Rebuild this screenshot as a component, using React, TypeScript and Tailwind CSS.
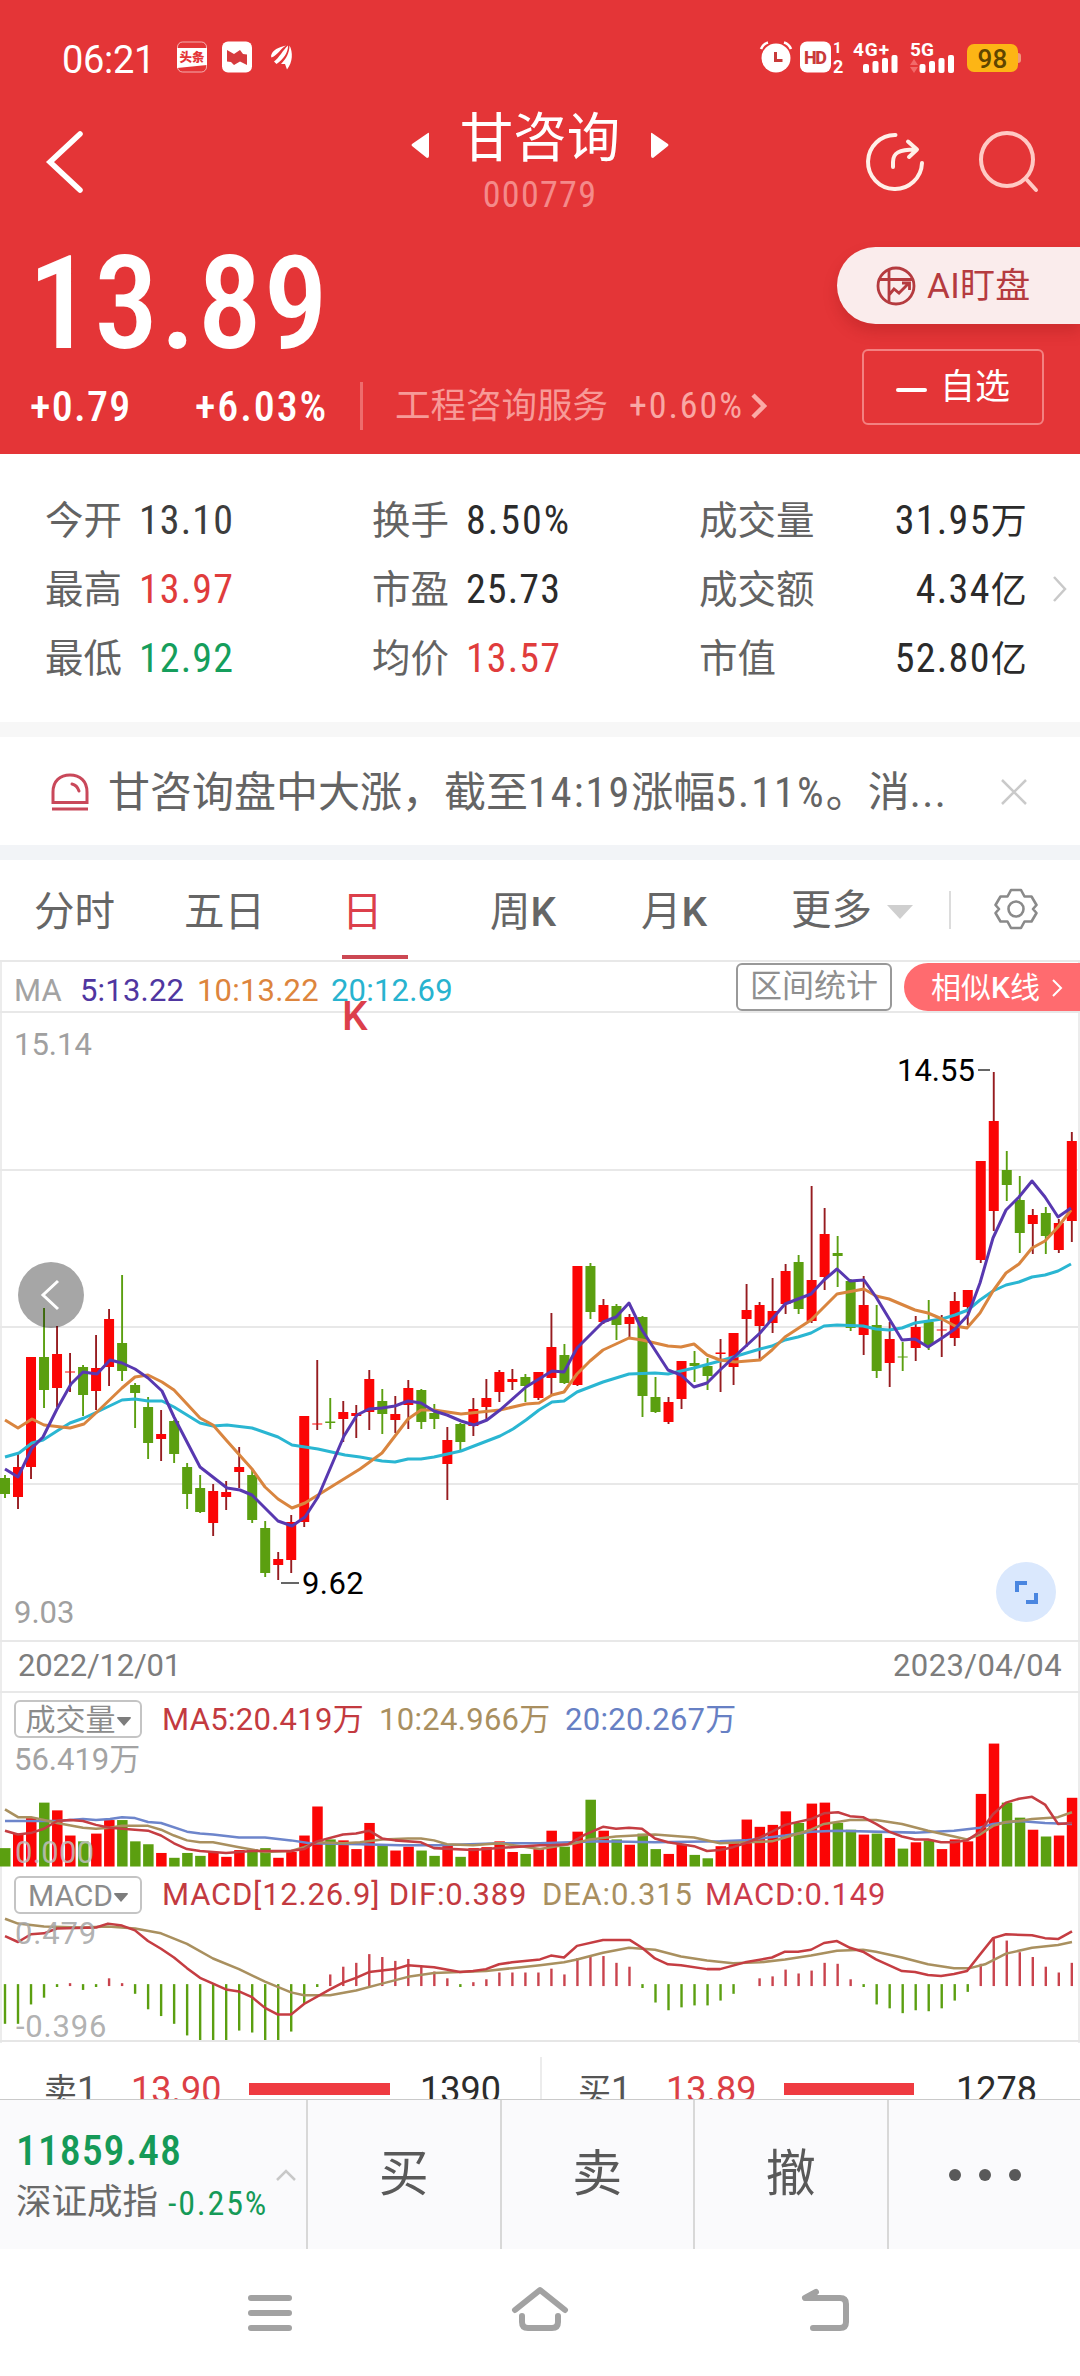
const RED = '#fb0505';
const GREEN = '#5b9f10';

const SANS = '[font-family:Roboto,"Noto_Sans_CJK_SC",sans-serif]';
const DIN = '[font-family:Roboto,"Noto_Sans_CJK_SC",sans-serif] [font-stretch:75%]';

const quotes = [
    [
        { label: '今开', value: '13.10', color: 'text-[#3d3d3d]' },
        { label: '最高', value: '13.97', color: 'text-[#e03c3c]' },
        { label: '最低', value: '12.92', color: 'text-[#159e5c]' },
    ],
    [
        { label: '换手', value: '8.50%', color: 'text-[#2b2b2b]' },
        { label: '市盈', value: '25.73', color: 'text-[#2b2b2b]' },
        { label: '均价', value: '13.57', color: 'text-[#e03c3c]' },
    ],
];

const totals = [
    { label: '成交量', value: '31.95', unit: '万' },
    { label: '成交额', value: '4.34', unit: '亿' },
    { label: '市值', value: '52.80', unit: '亿' },
];

// [high, body top, body bottom, low, 1 = up / 0 = down]
const candles = [
    [1475, 1478, 1494, 1498, 0], [1453, 1467, 1497, 1509, 1], [1357, 1357, 1467, 1479, 1], [1308, 1357, 1390, 1408, 0],
    [1326, 1354, 1388, 1407, 1], [1353, 1371.5, 1372.5, 1392, 1], [1365, 1367, 1395, 1416, 0], [1335, 1368, 1391, 1410, 1],
    [1309, 1319, 1367, 1386, 1], [1275, 1343, 1371, 1381, 0], [1383, 1385, 1393, 1428, 0], [1397, 1407, 1443, 1459, 0],
    [1410, 1434, 1439, 1461, 1], [1420, 1421, 1454, 1463, 0], [1463, 1467, 1494, 1509, 0], [1475, 1488, 1512, 1513, 0],
    [1484, 1491, 1523, 1536, 1], [1481, 1492, 1497, 1510, 1], [1447, 1467, 1472, 1488, 1], [1470, 1475, 1520, 1523, 0],
    [1521, 1528, 1573, 1577, 0], [1552, 1559, 1565, 1580, 1], [1515, 1522, 1560, 1573, 1], [1416, 1416, 1522, 1527, 1],
    [1360, 1423.5, 1424.5, 1430, 1], [1398, 1421.5, 1423, 1429, 0], [1401, 1412, 1419, 1442, 1], [1405, 1413, 1416, 1438, 1],
    [1370, 1379, 1412, 1430, 1], [1389, 1401, 1414, 1434, 0], [1396, 1414, 1420, 1433, 1], [1380, 1388, 1405, 1429, 1],
    [1389, 1390, 1422, 1429, 0], [1404, 1413, 1419, 1429, 0], [1427, 1440, 1464, 1500, 1], [1423, 1424, 1442, 1450, 0],
    [1398, 1409, 1426, 1436, 1], [1379, 1398, 1407, 1419, 1], [1370, 1372, 1392, 1402, 1], [1369, 1379, 1382, 1390, 1],
    [1374, 1377, 1386, 1402, 0], [1372, 1372, 1398, 1400, 1], [1313, 1347, 1378, 1395, 1], [1344, 1355, 1383, 1384, 0],
    [1266, 1266, 1385, 1386, 1], [1263, 1266, 1312, 1319, 0], [1299, 1305, 1322, 1324, 1], [1304, 1306, 1325, 1340, 0],
    [1314, 1317, 1324, 1339, 1], [1316, 1317, 1396, 1417, 0], [1377, 1397, 1412, 1413, 0], [1397, 1402, 1422, 1424, 1],
    [1361, 1361, 1399, 1409, 1], [1351, 1363, 1366, 1382, 0], [1358, 1366, 1376, 1390, 0], [1339, 1352.5, 1354, 1392, 1],
    [1333, 1333, 1367, 1385, 1], [1284, 1310, 1319, 1347, 1], [1302, 1305, 1326, 1359, 1], [1278, 1311, 1323, 1333, 1],
    [1264, 1271, 1304, 1314, 1], [1255, 1262, 1309, 1314, 0], [1186, 1280, 1321, 1323, 1], [1208, 1234, 1277, 1290, 1],
    [1236, 1253, 1256, 1287, 0], [1279, 1281, 1328, 1331, 0], [1276, 1305, 1335, 1355, 1], [1305, 1325, 1371, 1378, 0],
    [1322, 1339, 1363, 1387, 1], [1342, 1356.5, 1357.5, 1371, 0], [1316, 1327, 1348, 1361, 1], [1300, 1322, 1345, 1350, 0],
    [1315, 1329.5, 1330.5, 1357, 1], [1292, 1301, 1338, 1346, 1], [1290, 1290, 1307, 1325, 1], [1161, 1161, 1260, 1263, 1],
    [1072, 1121, 1211, 1231, 1], [1151, 1170, 1185, 1201, 0], [1176, 1200, 1233, 1253, 0], [1209, 1215, 1224, 1254, 1],
    [1207, 1213, 1236, 1254, 0], [1219, 1223, 1250, 1253, 1], [1132, 1141, 1221, 1242, 1],
];

const volumes = [
    19, 34, 50, 66, 58, 32, 26, 34, 48, 48, 26, 23, 14, 9, 14, 11, 15, 10, 17, 18, 19, 9, 15, 32, 62, 28, 27, 18, 45, 22,
    16.5, 20.5, 16.5, 11, 22, 10, 19, 20, 26, 15, 13, 18, 37, 20.5, 36, 69, 37, 28, 22.5, 34, 18, 13, 23, 12, 8.5, 21, 27,
    48.5, 41, 43, 57, 45, 65, 66, 45, 38, 33, 34, 29.5, 18.5, 25, 27, 18, 28, 26, 75, 127, 66, 50.5, 38, 31, 32, 71,
];

const macd = [
    -41, -41, -21, -14, -3, 3, -6, -3, 8, 3, -10, -26, -33, -41, -53, -58, -58, -58, -48, -50, -58, -58, -49, -20, -3, 12,
    20, 24, 33, 30, 26, 28, 20, 15, 8, -3, 4, 7, 14, 14, 14, 14, 18, 12, 29, 32, 31, 24, 20, -4, -19, -27, -24, -22, -22,
    -17, -10, 0, 8, 10, 17, 13, 16, 24, 23, 7, -3, -21, -25, -30, -27, -28, -25, -17, -8, 23, 49, 47, 35, 30, 20, 14, 24,
];

const ma5 =
    '5,1469 18,1477 32,1448 43,1437 57,1409 71,1384 83,1372 97,1374 110,1360 122,1363 135,1369 148,1378 162,1391 174,1417 200,1467 227,1488 240,1490 252,1495 278,1521 292,1526 305,1517 318,1497 344,1436 357,1415 369,1409 382,1408 395,1406 408,1401 421,1403 434,1411 447,1415 461,1421 474,1425 487,1420 500,1410 526,1387 539,1379 552,1371 564,1372 577,1348 590,1335 603,1322 616,1317 629,1303 642,1330 668,1370 681,1375 694,1387 707,1383 720,1370 733,1358 760,1333 785,1304 811,1294 824,1280 837,1269 850,1281 864,1280 876,1297 902,1340 915,1339 928,1347 942,1338 955,1329 968,1315 980,1283 993,1238 1006,1210 1019,1197 1032,1181 1045,1197 1058,1217 1071,1208';
const ma10 =
    '5,1420 18,1428 32,1419 44,1425 70,1428 84,1424 97,1412 122,1388 135,1377 148,1375 162,1382 174,1390 200,1418 213,1425 227,1441 252,1469 265,1487 278,1499 292,1508 305,1503 318,1495 360,1469 382,1453 408,1419 421,1410 434,1410 461,1414 500,1410 526,1404 539,1403 552,1395 564,1392 577,1374 590,1361 603,1350 616,1344 629,1338 642,1340 668,1346 681,1347 694,1344 707,1355 720,1360 735,1362 760,1360 772,1350 785,1337 811,1320 824,1307 837,1294 864,1289 876,1296 889,1299 915,1310 928,1313 942,1319 955,1326 967,1328 980,1313 993,1291 1006,1273 1019,1264 1032,1248 1045,1241 1058,1227 1071,1210';
const ma20 =
    '5,1457 19,1453 32,1443 43,1440 57,1431 70,1423 84,1418 97,1412 122,1400 135,1399 148,1401 162,1401 174,1407 200,1423 213,1426 227,1425 252,1428 278,1437 292,1445 318,1449 345,1455 360,1457 382,1461 395,1462 408,1459 421,1459 434,1457 461,1451 474,1446 487,1441 500,1436 513,1429 526,1420 539,1410 552,1402 564,1401 577,1392 603,1382 629,1374 655,1373 668,1374 694,1368 720,1361 760,1349 772,1346 785,1340 798,1337 811,1333 824,1326 837,1325 863,1326 876,1329 889,1330 902,1328 915,1323 942,1319 955,1315 968,1310 980,1300 993,1291 1006,1285 1019,1282 1032,1277 1045,1275 1058,1271 1071,1264';

const vol5 =
    '5,1837 18,1841 32,1839 44,1835 57,1827 70,1826 83,1827 96,1831 110,1834 135,1836 148,1837 161,1842 174,1850 187,1856 200,1858 226,1860 252,1858 278,1858 291,1858 304,1856 317,1848 343,1841 356,1840 369,1837 382,1845 395,1847 421,1849 434,1855 473,1857 499,1855 512,1854 540,1852 551,1852 568,1851 585,1841 603,1833 616,1835 629,1834 642,1835 655,1845 668,1849 681,1851 694,1853 707,1858 720,1857 733,1854 745,1850 758,1845 772,1838 785,1831 811,1825 824,1819 838,1818 850,1822 863,1823 876,1830 889,1838 902,1843 915,1846 928,1846 941,1849 954,1849 967,1847 980,1838 993,1820 1006,1808 1019,1804 1032,1802 1045,1810 1058,1830 1072,1829';
const vol10 =
    '5,1815 18,1823 31,1823 44,1826 57,1829 83,1834 96,1835 110,1834 122,1832 148,1832 161,1836 174,1842 187,1847 200,1849 213,1849 239,1854 265,1859 291,1858 304,1854 317,1849 343,1850 360,1849 382,1846 408,1845 421,1845 434,1847 447,1851 473,1852 499,1850 540,1856 575,1850 590,1846 616,1843 655,1841 694,1844 720,1850 745,1849 772,1848 785,1844 811,1836 824,1830 850,1826 876,1826 902,1830 928,1837 954,1843 967,1846 980,1841 993,1832 1006,1828 1019,1827 1032,1825 1058,1823 1072,1818';
const vol20 =
    '5,1827 31,1827 57,1827 83,1825 96,1826 110,1825 122,1823 135,1824 148,1828 161,1829 187,1838 200,1840 213,1841 239,1844 265,1844 291,1847 310,1850 360,1851 400,1852 440,1852 500,1850 540,1850 600,1848 655,1849 720,1848 745,1847 785,1842 811,1838 837,1837 915,1839 954,1837 980,1834 993,1830 1019,1827 1045,1829 1072,1830';

const dif =
    '5,1946 18,1952 31,1944 44,1943 57,1938 96,1937 108,1933 122,1935 135,1940 148,1951 161,1959 174,1968 187,1979 200,1989 213,1995 226,2001 239,2003 252,2009 265,2020 278,2027 291,2027 304,2016 330,2001 343,1994 356,1989 369,1983 395,1980 408,1976 434,1978 460,1983 473,1982 486,1980 499,1975 512,1973 540,1970 551,1966 564,1968 577,1956 603,1950 630,1950 642,1958 655,1969 668,1975 681,1976 707,1980 720,1980 745,1973 772,1968 785,1962 798,1962 811,1960 824,1953 837,1951 850,1958 863,1962 876,1970 902,1982 915,1983 928,1986 941,1987 954,1985 967,1982 980,1965 993,1948 1006,1944 1032,1945 1045,1948 1058,1949 1072,1941';
const dea =
    '5,1928 18,1933 44,1936 83,1937 108,1936 135,1938 161,1943 187,1954 213,1969 239,1980 265,1993 291,2004 304,2007 330,2007 356,2002 382,1995 408,1988 434,1984 460,1983 486,1982 512,1979 540,1976 564,1973 577,1970 603,1963 629,1958 655,1960 681,1967 707,1971 733,1974 760,1973 785,1970 811,1966 837,1961 863,1960 876,1962 902,1968 928,1975 954,1979 970,1979 985,1975 1006,1964 1032,1958 1058,1955 1072,1952';

// The indicator series are stored on a slightly taller scale than they are drawn at
const INDICATOR_SCALE = 'translate(0 52.48) scale(1 0.968)';

const slotX = (i: number) => 5 + i * 13.01;

function Line({ points, color, width = 2.6 }: { points: string; color: string; width?: number }) {
    return <polyline points={points} fill="none" stroke={color} strokeWidth={width} strokeLinejoin="round" />;
}

function StatusBar() {
    return (
        <div className={`flex h-[112px] items-center pt-1.5 pr-[59px] pl-[62px] text-white ${SANS}`}>
            <span className="w-[115px] pt-0.5 text-[38px] tracking-[-0.3px]">06:21</span>
            <svg width="30" height="32" viewBox="0 0 30 32" className="-mt-1">
                <rect x="0.5" y="1" width="29" height="30" rx="5" fill="none" stroke="#fff" strokeOpacity="0.6" />
                <path d="M0 7 L30 7 V24 L0 27 Z" fill="#fff" />
                <text x="15" y="21" textAnchor="middle" fontSize="12.500" fontWeight="900" fill="#e43537" className={SANS}>头条</text>
            </svg>
            <svg width="30" height="32" viewBox="0 0 30 32" className="-mt-1 ml-[15px]">
                <rect y="0.5" width="30" height="31" rx="6" fill="#fff" />
                <path d="M5 9 L12 13 L18 9 L21 13 L25 13.500 V24 L18 20.500 L12 24 L9 21 L5 20.500 Z" fill="#d63a3d" strokeLinejoin="round" />
            </svg>
            <svg width="24" height="28" viewBox="0 0 24 28" className="-mt-1 ml-[18px]" fill="#fff">
                <path d="M1 13 C2 7 9 4 16 2.500 C10 6 8 12 1.500 14.500 Z" />
                <path d="M4 18.500 C9 15 13 7 18 2.500 C18.500 9 13 17 6.500 21 Z" />
                <path d="M11 21 C16 16 19.500 10 19.500 2.500 C23 9 23 19 17 26.500 L15 21 Z" />
            </svg>

            <svg width="34" height="34" viewBox="0 0 34 34" className="-mt-1 ml-auto">
                <circle cx="17" cy="18" r="14.5" fill="#fff" />
                <path d="M2 9 Q4 4 9 2.500 M32 9 Q30 4 25 2.500" stroke="#fff" strokeWidth="2.600" fill="none" />
                <path d="M16.500 12 V20.500 H23.500" stroke="#c93a3a" strokeWidth="3" fill="none" />
            </svg>
            <svg width="46" height="34" viewBox="0 0 46 34" className="-mt-1 ml-[7px] overflow-visible [font-family:Roboto,sans-serif]" fill="#fff">
                <rect y="1.5" width="31" height="31" rx="7" />
                <text x="15.5" y="23.5" textAnchor="middle" fontSize="18" fontWeight="800" fill="#c93a3a" textLength="23">HD</text>
                <text x="33" y="13" fontSize="15" fontWeight="700">1</text>
                <text x="33" y="32.500" fontSize="18" fontWeight="700">2</text>
            </svg>
            <svg width="48" height="34" viewBox="0 0 48 34" className="-mt-1 ml-[7px] overflow-visible [font-family:Roboto,sans-serif]" fill="#fff">
                <text x="0" y="15.500" fontSize="19" fontWeight="700" textLength="36">4G+</text>
                {[9, 12, 15, 18].map((h, i) => (
                    <rect key={h} x={10 + i * 9.5} y={33 - h} width="6" height={h} rx="2" />
                ))}
            </svg>
            <svg width="48" height="34" viewBox="0 0 48 34" className="-mt-1 ml-[9px] overflow-visible [font-family:Roboto,sans-serif]" fill="#fff">
                <text x="0" y="15.500" fontSize="19" fontWeight="700" textLength="24">5G</text>
                <path d="M0 25 L4 19 L8 25 Z M0 27 L4 33 L8 27 Z" fill="#f26a6a" />
                {[9, 12, 15, 18].map((h, i) => (
                    <rect key={h} x={9.5 + i * 9.5} y={33 - h} width="6" height={h} rx="2" />
                ))}
            </svg>
            <div className="-mt-0.5 ml-[9px] flex h-7 w-[51px] items-center justify-center rounded-[7px] bg-[#fdb515] pt-0.5 text-[26px] font-medium tracking-[0.3px] text-[#604500]">
                98
            </div>
            <div className="-mt-0.5 h-2.5 w-[3px] rounded-r bg-[#f09a7a]" />
        </div>
    );
}

function TitleBar() {
    return (
        <div className="flex h-[122px] items-start">
            <svg width="46" height="70" viewBox="0 0 46 70" className="mt-[15px] ml-[42px]" fill="none" stroke="#fff" strokeWidth="5.500">
                <path d="M38 7 L8 35 L38 63" strokeLinecap="round" />
            </svg>
            <div className="ml-[320px] flex w-[264px] flex-col items-center">
                <div className="flex w-full items-center justify-between px-[3px]">
                    <svg width="18" height="28" viewBox="0 0 18 28" className="mt-3" fill="#fff">
                        <path d="M17 2 Q18 1 18 3 V25 Q18 27 16 27 L1 15 Q0 14 1 13 Z" />
                    </svg>
                    <h1 className={`h-[54px] text-[53.500px] leading-[54px] text-white ${SANS}`}>甘咨询</h1>
                    <svg width="18" height="28" viewBox="0 0 18 28" className="mt-3" fill="#fff">
                        <path d="M1 2 Q0 1 0 3 V25 Q0 27 2 27 L17 15 Q18 14 17 13 Z" />
                    </svg>
                </div>
                <div className={`mt-[9px] text-[36px] leading-10 tracking-[1.3px] text-[#f48a8a] ${DIN}`}>000779</div>
            </div>
            <svg width="64" height="64" viewBox="0 0 64 64" className="mt-[18px] ml-[191px]" fill="none" stroke="#fff0e8" strokeWidth="4">
                <path d="M32.500 5 A27 27 0 1 0 59 33" strokeLinecap="round" />
                <path d="M30 37 V32 C30 23 36 19.500 52 19.500 M45 11.500 L54 19.500 L46 27" strokeLinecap="round" strokeLinejoin="round" />
            </svg>
            <svg width="64" height="64" viewBox="0 0 64 64" className="mt-[18px] ml-[51px]" fill="none" stroke="#ffc9c4" strokeWidth="4">
                <ellipse cx="29" cy="29.500" rx="26" ry="26.500" />
                <path d="M49 50 L58 60" strokeLinecap="round" />
            </svg>
        </div>
    );
}

function PriceHeader() {
    return (
        <div className="flex h-[220px] justify-between">
            <div className="pl-[30px]">
                <div className={`-ml-0.5 mt-[13px] h-[112px] text-[129px] leading-[114px] font-medium tracking-[1.5px] text-white ${DIN}`}>13.89</div>
                <div className={`mt-[21px] flex h-[52px] items-center ${DIN}`}>
                    <span className="w-[165px] text-[42px] font-medium tracking-[1.3px] text-white">+0.79</span>
                    <span className="w-[165px] text-[42px] font-medium tracking-[1.9px] text-white">+6.03%</span>
                    <span className="h-12 w-[3px] bg-[#ee6c6c]" />
                    <span className={`ml-[32px] w-[234px] pt-0.5 text-[35.500px] text-[#f79a98] ${SANS}`}>
                        工程咨询服务
                    </span>
                    <span className="text-[36px] tracking-[1.9px] text-[#f9a7a4]">+0.60%</span>
                    <svg width="18" height="28" viewBox="0 0 18 28" className="ml-1.5" fill="none" stroke="#fbaaa6" strokeWidth="4.500">
                        <path d="M3 3 L14 14 L3 25" />
                    </svg>
                </div>
            </div>
            <div className="flex flex-col items-end">
                <button className={`mt-[13px] flex h-[77px] w-[243px] items-center rounded-l-full bg-[#faecec] pl-[39px] text-[35px] text-[#b53b3f] shadow-[0_8px_14px_rgba(140,20,20,0.25)] ${SANS}`}>
                    <svg width="40" height="40" viewBox="0 0 40 40" fill="none" stroke="#b53b3f" strokeWidth="2.800">
                        <circle cx="20" cy="20" r="18" />
                        <path d="M13 3.500 V36 M3.500 13.500 H37 M13 29 L18 23 L23 27 L33 17 M26 17 H33.500 V24" />
                    </svg>
                    <span className="ml-[11px] pt-[3px] tracking-[0.3px]">AI盯盘</span>
                </button>
                <button className={`mt-[25px] mr-9 flex h-[76px] w-[182px] items-center rounded-md border-2 border-[#f38181] pl-[32px] text-[35px] text-white ${SANS}`}>
                    <span className="mt-1.5 mr-[13px] h-1 w-[31px] rounded bg-white" />
                    <span className="pt-[3px]">自选</span>
                </button>
            </div>
        </div>
    );
}

function Quotes() {
    return (
        <section className="flex h-[268px] bg-white pt-[32px] pl-[45px]">
            {quotes.map((column) => (
                <div key={column[0].label} className="w-[327px]">
                    {column.map(({ label, value, color }) => (
                        <div key={label} className="flex h-[69px] items-center">
                            <span className={`w-[94px] pt-px text-[38.500px] text-[#636363] ${SANS}`}>{label}</span>
                            <span className={`text-[40px] ${value.endsWith('%') ? 'tracking-[2px]' : 'tracking-[1.1px]'} ${DIN} ${color}`}>{value}</span>
                        </div>
                    ))}
                </div>
            ))}
            <div className="w-[329px]">
                {totals.map(({ label, value, unit }) => (
                    <div key={label} className="flex h-[69px] items-center justify-between text-[#2b2b2b]">
                        <span className={`pt-px text-[38.500px] text-[#636363] ${SANS}`}>{label}</span>
                        <span className={`text-[40px] tracking-[1.3px] ${DIN}`}>
                            {value}
                            <span className="text-[36px]">{unit}</span>
                        </span>
                    </div>
                ))}
            </div>
            <svg width="16" height="28" viewBox="0 0 16 28" className="mt-[89px] ml-6" fill="none" stroke="#c9c9c9" strokeWidth="2.500">
                <path d="M2 2 L13 14 L2 26" />
            </svg>
        </section>
    );
}

function NewsBar() {
    return (
        <section className="flex h-[108px] items-center pt-0.5 pl-[51px]">
            <svg width="38" height="38" viewBox="0 0 38 38" fill="none" stroke="#c9485a" strokeWidth="3">
                <path d="M2 29.500 V19 C2 8 9 2 19 2 C29 2 36 8 36 19 V29.500 Z" />
                <path d="M1 36 H37" />
                <path d="M21 11 Q26 12 28 18" strokeLinecap="round" />
            </svg>
            <p className={`ml-[19px] w-[893px] text-[42px] whitespace-nowrap text-[#646464] ${DIN}`}>
                甘咨询盘中大涨，截至
                <span className="tracking-[2.1px]">14:19</span>
                涨幅
                <span className="tracking-[2.1px]">5.11%</span>
                。消
                <span className="tracking-[1.5px]">...</span>
            </p>
            <svg width="26" height="26" viewBox="0 0 26 26" stroke="#cacaca" strokeWidth="2.500">
                <path d="M1 1 L25 25 M25 1 L1 25" />
            </svg>
        </section>
    );
}

function PeriodTabs() {
    return (
        <nav className={`flex h-[100px] items-stretch text-[40.500px] leading-[104px] text-[#666] ${SANS}`}>
            <span className="ml-[34px] w-[150px]">分时</span>
            <span className="w-[158px]">五日</span>
            <span className="flex w-[66px] flex-col text-[#dc3f4b]">
                <span className="h-[95px]">
                    日<b className="font-medium">K</b>
                </span>
                <span className="h-1 bg-[#cc4853]" />
            </span>
            <span className="ml-[82px] w-[151px]">
                周<b className="font-medium">K</b>
            </span>
            <span className="w-[150px]">
                月<b className="font-medium">K</b>
            </span>
            <span className="flex items-center">
                更多
                <svg width="26" height="14" viewBox="0 0 26 14" className="mt-1 ml-[15px]" fill="#cfcfcf">
                    <path d="M0 0 H26 L13 14 Z" />
                </svg>
            </span>
            <span className="mt-[31px] ml-[36px] h-[38px] w-0.5 bg-[#dcdcdc]" />
            <svg width="44" height="44" viewBox="0 0 44 44" className="mt-[27px] ml-[43px]" fill="none" stroke="#8a8a8a" strokeWidth="2.600" strokeLinejoin="round">
                <path d="M17 3 H27 L30.500 9.500 H37.500 L42.500 18 L39 22 L42.500 26 L37.500 34.500 H30.500 L27 41 H17 L13.500 34.500 H6.500 L1.500 26 L5 22 L1.500 18 L6.500 9.500 H13.500 Z" />
                <circle cx="22" cy="22" r="7.500" />
            </svg>
        </nav>
    );
}

function MaBar() {
    return (
        <div className={`flex h-[53px] items-center border-y-2 border-[#e8e8e8] pl-[14px] text-[31px] tracking-[0.2px] ${SANS}`}>
            <span className="mt-[9px] w-[66px] text-[#a3a3a3]">MA</span>
            <span className="mt-[9px] w-[117px] text-[#5036a0]">5:13.22</span>
            <span className="mt-[9px] w-[134px] text-[#dd853d]">10:13.22</span>
            <span className="mt-[9px] w-[130px] text-[#28b3cf]">20:12.69</span>
            <button className="ml-auto h-12 w-[156px] rounded-md border-2 border-[#999] text-[32px] leading-[43px] tracking-normal text-[#8f8f8f]">
                区间统计
            </button>
            <button className="ml-3 flex h-12 w-[176px] items-center rounded-l-full bg-[#ff6b6f] pt-0.5 pl-[27px] text-[30px] tracking-normal text-white">
                <span>相似<b className="font-medium">K</b>线</span>
                <svg width="11" height="18" viewBox="0 0 11 18" className="ml-3" fill="none" stroke="#fff" strokeWidth="2">
                    <path d="M1 1 L9 9 L1 17" />
                </svg>
            </button>
        </div>
    );
}

function PriceChart() {
    return (
        <svg width="1080" height="627" viewBox="0 1013 1080 627" className={`block ${SANS}`}>
            <path d="M0 1170 H1078 M0 1327 H1078 M0 1484 H1078" stroke="#e8e8e8" strokeWidth="2" />
            {candles.map(([high, top, bottom, low, up], i) => (
                <g key={i}>
                    <path d={`M${slotX(i)} ${high} V${low}`} stroke={up ? '#961c20' : GREEN} strokeWidth="1.900" />
                    <rect x={slotX(i) - 5} y={top} width="10" height={bottom - top} fill={up ? RED : GREEN} />
                </g>
            ))}
            <Line points={ma20} color="#2ab6d2" width={3} />
            <Line points={ma10} color="#d9853f" width={3} />
            <Line points={ma5} color="#5838b0" width={3} />
            <g fontSize="31">
                <text x="14" y="1055" fill="#a0a0a0">15.14</text>
                <text x="14" y="1623" fill="#a0a0a0">9.03</text>
                <text x="897" y="1081" fill="#000">14.55</text>
                <text x="302" y="1594" fill="#000" letterSpacing="0.4">9.62</text>
            </g>
            <path d="M978 1070 H990 M281 1583 H299" stroke="#666" strokeWidth="1.800" />
            <circle cx="51" cy="1295" r="33" fill="#000" fillOpacity="0.35" />
            <path d="M58 1281 L43 1295 L58 1309" fill="none" stroke="#fff" strokeWidth="3" />
            <circle cx="1026" cy="1592" r="30" fill="#dae8fd" />
            <path d="M1017 1592 V1583 H1027 M1026 1602 H1036 V1593" fill="none" stroke="#4a86e0" strokeWidth="4" />
        </svg>
    );
}

function IndicatorPicker({ name }: { name: string }) {
    return (
        <button className="ml-3.5 flex h-[38px] w-[128px] shrink-0 items-center justify-center rounded-md border-2 border-[#c4c4c4] text-[30px] tracking-normal text-[#8c8c8c]">
            {name}
            <svg width="14" height="9" viewBox="0 0 14 9" className="mt-1 ml-px shrink-0" fill="#7d7d7d">
                <path d="M0 1 Q0 0 1 0 H13 Q14 0 14 1 L7 9 Z" />
            </svg>
        </button>
    );
}

function VolumePanel() {
    return (
        <div className={`text-[31px] tracking-[0.3px] ${SANS}`}>
            <div className="flex h-[50px] items-center pt-0.5">
                <IndicatorPicker name="成交量" />
                <span className="ml-5 w-[217px] pt-0.5 text-[#c33a40]">MA5:20.419万</span>
                <span className="w-[186px] pt-0.5 text-[#a98f60]">10:24.966万</span>
                <span className="pt-0.5 text-[#6780c4]">20:20.267万</span>
            </div>
            <svg width="1080" height="130" viewBox="0 1743 1080 130" className="block overflow-visible" fontSize="31">
                <text x="14" y="1770" fill="#a3a3a3" letterSpacing="0">56.419万</text>
                <g transform={INDICATOR_SCALE}>
                    {volumes.map((v, i) => (
                        <rect key={i} x={slotX(i) - 5} y={1874 - v} width="10.500" height={v} fill={candles[i][4] ? RED : GREEN} />
                    ))}
                    <Line points={vol20} color="#6d85cb" />
                    <Line points={vol10} color="#a9905f" />
                    <Line points={vol5} color="#c53d42" />
                </g>
                <text x="15" y="1863" fill="#c0c0c0" fillOpacity="0.85">0.000</text>
            </svg>
        </div>
    );
}

function MacdPanel() {
    return (
        <div className={`text-[31px] tracking-[0.8px] ${SANS}`}>
            <div className="flex h-11 items-center">
                <IndicatorPicker name="MACD" />
                <span className="ml-5 w-[380px] text-[#c33a40]">MACD[12.26.9] DIF:0.389</span>
                <span className="w-[163px] text-[#a98f60]">DEA:0.315</span>
                <span className="text-[#cc3a4a]">MACD:0.149</span>
            </div>
            <svg width="1080" height="126" viewBox="0 1917 1080 126" className="block overflow-visible" fontSize="31">
                <g transform={INDICATOR_SCALE}>
                    {macd.map((m, i) => (
                        <path
                            key={i}
                            d={m > 0 ? `M${slotX(i)} ${1997.5 - m} V1997.500` : `M${slotX(i)} 1995.500 V${1995.5 - m}`}
                            stroke={m > 0 ? '#c9434d' : GREEN}
                            strokeWidth="2.400"
                        />
                    ))}
                    <Line points={dea} color="#a9905f" />
                    <Line points={dif} color="#c53d42" />
                </g>
                <text x="15" y="1944" fill="#a8a8a8" fillOpacity="0.9">0.479</text>
                <text x="16" y="2037" fill="#a8a8a8" fillOpacity="0.9">-0.396</text>
                <path d="M0 2041 H1080" stroke="#e6e6e6" strokeWidth="2" />
            </svg>
        </div>
    );
}

function OrderBook() {
    return (
        <section className={`flex h-14 items-start overflow-hidden pt-[22px] text-[36px] leading-[50px] ${SANS}`}>
            <span className="ml-[44px] w-[87px] text-[#555]">
                <span className="text-[33px]">卖</span>1
            </span>
            <span className="w-[118px] text-[#dc3f46]">13.90</span>
            <span className="mt-[18px] h-3 w-[141px] bg-[#ef3b41]" />
            <span className="ml-[30px] w-[120px] text-[#2c2c2c]">1390</span>
            <span className="-mt-2 h-12 w-0.5 bg-[#ececec]" />
            <span className="ml-[36px] w-[88px] text-[#555]">
                <span className="text-[33px]">买</span>1
            </span>
            <span className="w-[118px] text-[#dc3f46]">13.89</span>
            <span className="mt-[18px] h-3 w-[130px] bg-[#ef3b41]" />
            <span className="ml-[42px] text-[#2c2c2c]">1278</span>
        </section>
    );
}

function TradeBar() {
    return (
        <section className={`flex h-[150px] border-t border-[#cacaca] bg-[#fafafc] ${SANS}`}>
            <div className="flex w-[308px] justify-between border-r-2 border-[#d8d8d8] pl-4">
                <div>
                    <div className={`mt-[26px] text-[42px] leading-[50px] font-medium tracking-[0.9px] text-[#159a58] ${DIN}`}>11859.48</div>
                    <div className="flex h-[54px] items-center text-[35.500px] whitespace-nowrap text-[#6a6a6a]">
                        深证成指
                        <span className={`ml-2.5 text-[34px] tracking-[1.8px] text-[#159a58] ${DIN}`}>-0.25%</span>
                    </div>
                </div>
                <svg width="20" height="12" viewBox="0 0 20 12" className="mt-[69px] -ml-1 mr-2.5 shrink-0" fill="none" stroke="#c8c8c8" strokeWidth="2.500">
                    <path d="M1 11 L10 2 L19 11" />
                </svg>
            </div>
            {['买', '卖', '撤'].map((action) => (
                <button key={action} className="w-[193.500px] border-r-2 border-[#d8d8d8] text-[50px] leading-[149px] text-[#595959]">
                    {action}
                </button>
            ))}
            <button className="flex flex-1 items-center justify-center gap-[18px] pl-0.5">
                <span className="size-3 rounded-full bg-[#595959]" />
                <span className="size-3 rounded-full bg-[#595959]" />
                <span className="size-3 rounded-full bg-[#595959]" />
            </button>
        </section>
    );
}

function SystemNav() {
    return (
        <nav className="flex h-[128px] items-start pt-[35px] pl-[240px]">
            <svg width="60" height="56" viewBox="0 0 60 56" fill="none" stroke="#a2a2a2" strokeWidth="6" strokeLinecap="round">
                <path d="M11 14 H49 M11 29 H49 M11 44 H49" />
            </svg>
            <svg width="60" height="56" viewBox="0 0 60 56" className="ml-[210px]" fill="none" stroke="#a2a2a2" strokeWidth="6" strokeLinecap="round" strokeLinejoin="round">
                <path d="M5 26 L30 6 L55 26" />
                <path d="M12 32 V38 Q12 44 18 44 H42 Q48 44 48 38 V32" />
            </svg>
            <svg width="60" height="56" viewBox="0 0 60 56" className="ml-[227px]" fill="none" stroke="#a2a2a2" strokeWidth="6" strokeLinecap="round" strokeLinejoin="round">
                <path d="M19 8 L8 14 H43 Q49 14 49 20 V38 Q49 44 43 44 H16" />
            </svg>
        </nav>
    );
}

export default function App() {
    return (
        <main className="h-[2376px] w-[1080px] overflow-hidden bg-white">
            <header className="h-[454px] bg-[#e43537]">
                <StatusBar />
                <TitleBar />
                <PriceHeader />
            </header>
            <Quotes />
            <div className="h-[15px] bg-[#f7f7f7]" />
            <NewsBar />
            <div className="h-[15px] bg-[#f2f4f7]" />
            <PeriodTabs />
            <div className="border-x-2 border-[#ececec]">
                <div className="-mx-0.5">
                    <MaBar />
                    <PriceChart />
                    <div className={`flex h-[53px] items-center justify-between border-y-2 border-[#e8e8e8] px-[18px] text-[31px] text-[#7d7d7d] ${SANS}`}>
                        <span className="tracking-[-0.2px]">2022/12/01</span>
                        <span className="tracking-[0.4px]">2023/04/04</span>
                    </div>
                    <VolumePanel />
                    <MacdPanel />
                </div>
            </div>
            <OrderBook />
            <TradeBar />
            <SystemNav />
        </main>
    );
}
